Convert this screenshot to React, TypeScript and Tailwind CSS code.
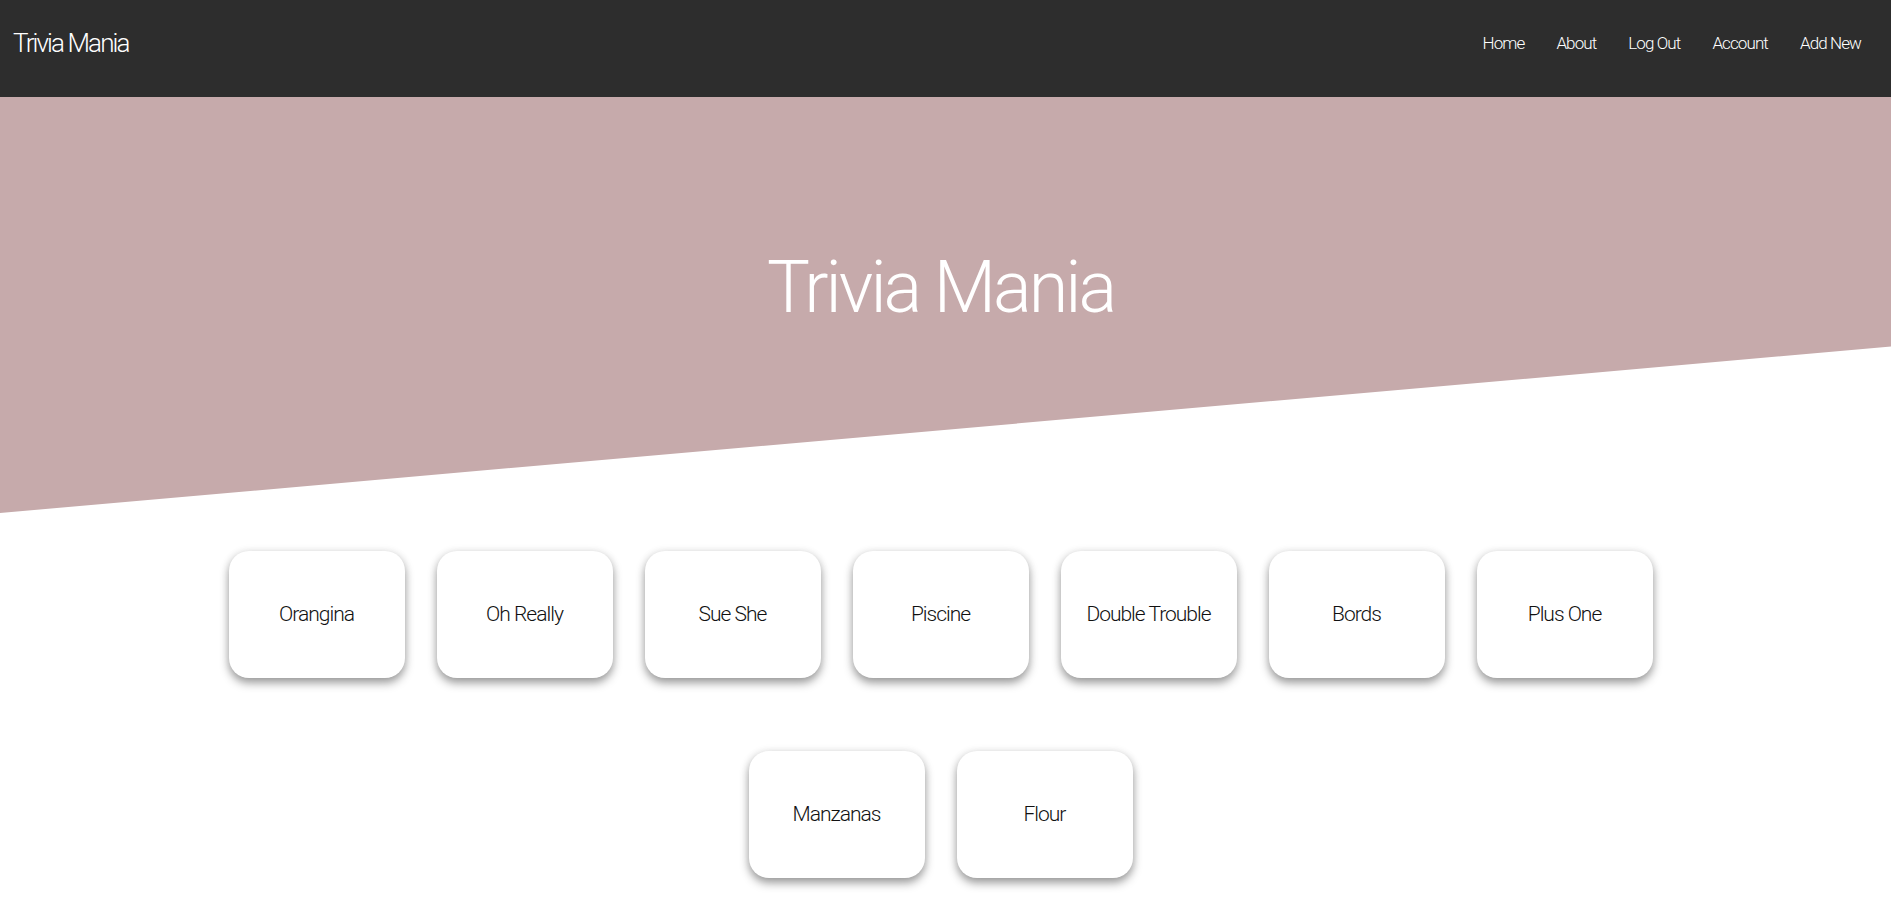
import React from "react";

const cards = [
  "Orangina",
  "Oh Really",
  "Sue She",
  "Piscine",
  "Double Trouble",
  "Bords",
  "Plus One",
  "Manzanas",
  "Flour",
];

const links = ["Home", "About", "Log Out", "Account", "Add New"];

export default function App() {
  return (
    <div
      className="min-h-[915px] bg-white font-light"
      style={{ fontFamily: "Roboto, 'Helvetica Neue', Arial, sans-serif" }}
    >
      <nav className="flex h-[97px] items-center justify-between bg-[#2d2d2d] pb-[10px] pl-[13px] pr-[30px] text-white">
        <div className="text-[26px] tracking-[-1.9px]">Trivia Mania</div>
        <ul className="flex items-center gap-[32px] text-[17px] tracking-[-0.9px]">
          {links.map((l) => (
            <li key={l}>{l}</li>
          ))}
        </ul>
      </nav>

      <header className="flex h-[416px] justify-center bg-[#c6aaab] pt-[155px] pr-[10px] [clip-path:polygon(0_0,100%_0,100%_60%,0_100%)]">
        <h1 className="text-[72px] leading-none tracking-[-3px] text-white">Trivia Mania</h1>
      </header>

      <main className="flex flex-wrap justify-center gap-x-[32px] gap-y-[73px] px-[220px] pt-[38px] pr-[230px]">
        {cards.map((c) => (
          <div
            key={c}
            className="flex h-[127px] w-[176px] items-center justify-center rounded-[20px] bg-white text-[21px] tracking-[-1px] text-[#111] shadow-[0_5px_10px_rgba(0,0,0,0.38),0_0_8px_rgba(0,0,0,0.08)]"
          >
            {c}
          </div>
        ))}
      </main>
    </div>
  );
}
